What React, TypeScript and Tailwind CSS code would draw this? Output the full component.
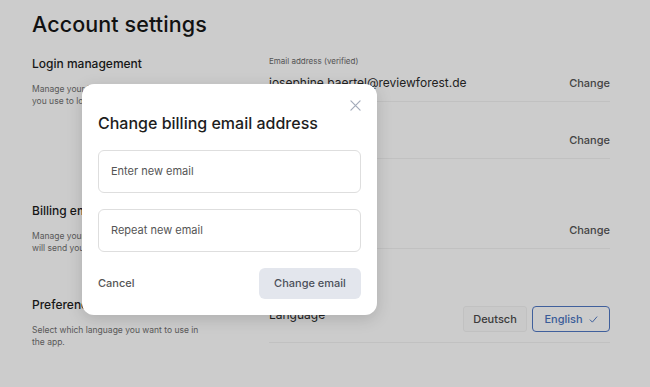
import { ReactNode } from "react";

const font = { fontFamily: "Inter, 'Noto Sans', sans-serif" };

function Field({
  label,
  value,
  first,
}: {
  label: string;
  value: ReactNode;
  first?: boolean;
}) {
  return (
    <div className={`border-b border-[#f2f2f2] pb-[10px] ${first ? "" : "mt-[10px]"}`}>
      <div className="text-[8px] leading-[12px] text-[#6a6a6a]">{label}</div>
      <div className="mt-[8px] flex items-center justify-between">
        <span className="text-[12px] leading-4 text-[#2a2a2a]">{value}</span>
        <button type="button" className="text-[11px] leading-4 font-medium text-[#555]">
          Change
        </button>
      </div>
    </div>
  );
}

function Section({
  title,
  description,
  children,
  className,
}: {
  title: string;
  description: string;
  children: ReactNode;
  className?: string;
}) {
  return (
    <div className={`flex ${className ?? ""}`}>
      <div className="w-[237px] shrink-0">
        <h2 className="text-[12px] leading-[18px] font-medium text-[#1c1c1c]">{title}</h2>
        <p className="mt-[10px] w-[176px] text-[8.5px] leading-[12px] text-[#707070]">
          {description}
        </p>
      </div>
      <div className="flex-1">{children}</div>
    </div>
  );
}

export default function App() {
  return (
    <div className="relative h-[387px] w-[650px] overflow-hidden bg-white" style={font}>
      <div className="pl-8 pr-10 pt-[8px]">
        <h1 className="text-[21.5px] leading-8 font-medium tracking-[0.1px] text-[#161616]">
          Account settings
        </h1>

        <Section
          className="mt-[15px]"
          title="Login management"
          description={"Manage your login email and password you\u00a0use\u00a0to log in."}
        >
          <Field first label="Email address (verified)" value="josephine.baertel@reviewforest.de" />
          <Field label="Password" value="••••••••••" />
        </Section>

        <Section
          className="mt-[43px]"
          title="Billing email"
          description={"Manage your billing email to which we will\u00a0send your invoices."}
        >
          <Field first label="Billing email address" value="No separate billing" />
        </Section>

        <Section
          className="mt-[42px]"
          title="Preferences"
          description="Select which language you want to use in the app."
        >
          <div className="mt-[10px] flex items-center justify-between border-b border-[#f2f2f2] pb-[10px]">
            <span className="-mt-2 text-[12px] leading-4 text-[#2a2a2a]">Language</span>
            <div className="flex gap-[5px]">
              <button
                type="button"
                className="h-[26px] w-16 rounded-[3px] border border-[#f2f2f2] bg-[#fcfcfc] text-[11px] font-medium text-[#4a4a4a]"
              >
                Deutsch
              </button>
              <button
                type="button"
                className="flex h-[26px] w-[78px] items-center justify-center gap-[6px] rounded-[4px] border-[1.5px] border-[#5178c4] text-[11px] font-medium text-[#4a74c0]"
              >
                English
                <svg width="9" height="9" viewBox="0 0 12 12" fill="none">
                  <path d="M1.5 6.5 L4.5 9.5 L10.5 2.5" stroke="currentColor" strokeWidth="1.3" strokeLinecap="round" strokeLinejoin="round" />
                </svg>
              </button>
            </div>
          </div>
        </Section>
      </div>

      <div className="absolute inset-0 bg-black/20" />

      <div className="absolute left-[82px] top-[84px] w-[295px] rounded-xl bg-white px-4 pb-4 pt-[28px] shadow-[0_4px_16px_rgba(0,0,0,0.15)]">
        <button type="button" className="absolute right-[16px] top-[16px] text-[#a3abba]">
          <svg width="11" height="11" viewBox="0 0 12 12" fill="none">
            <path d="M1 1 L11 11 M11 1 L1 11" stroke="currentColor" strokeWidth="1.3" strokeLinecap="round" />
          </svg>
        </button>
        <h3 className="text-[16px] leading-[22px] font-medium text-[#1d1d1d]">
          Change billing email address
        </h3>
        <div className="mt-[16px] flex h-[43px] items-center rounded-[6px] border border-[#dedede] px-3 text-[11px] text-[#555]">
          Enter new email
        </div>
        <div className="mt-4 flex h-[43px] items-center rounded-[6px] border border-[#dedede] px-3 text-[11px] text-[#555]">
          Repeat new email
        </div>
        <div className="mt-4 flex items-center justify-between">
          <button type="button" className="text-[11px] font-medium text-[#555]">
            Cancel
          </button>
          <button
            type="button"
            className="h-[31px] w-[102px] rounded-[6px] bg-[#e3e6ed] text-[11px] font-medium text-[#4b505a]"
          >
            Change email
          </button>
        </div>
      </div>
    </div>
  );
}
